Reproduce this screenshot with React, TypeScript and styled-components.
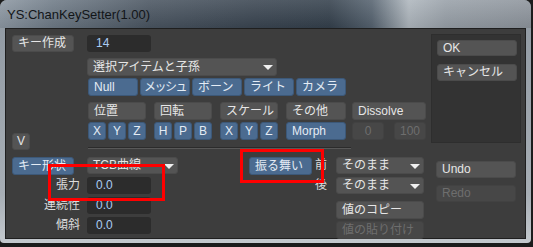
import styled, { createGlobalStyle } from "styled-components"

const GlobalStyle = createGlobalStyle`
  html, body {
    margin: 0;
    padding: 0;
    background: #1c1c1c;
  }
  * {
    box-sizing: border-box;
  }
`

const FONT = `"Liberation Sans", "Noto Sans CJK JP", sans-serif`

type Tone = "gray" | "blue" | "off"

const itemTypes = ["Null", "メッシュ", "ボーン", "ライト", "カメラ"]

export default function App() {
  return (
    <>
      <GlobalStyle />
      <Window>
        <TitleBar>YS:ChanKeySetter(1.00)</TitleBar>
        <Panel>
          <Main>
            <TopSection>
              <LeftCol>
                <Btn $w={62} $h={17}>キー作成</Btn>
                <Btn $w={18} $h={17} $center>V</Btn>
              </LeftCol>
              <MidCol>
                <Field $w={64}>14</Field>
                <Select $w={190} $h={18} $mt={6}>
                  選択アイテムと子孫
                  <Arrow />
                </Select>
                <ButtonRow $mt={2}>
                  {itemTypes.map((t) => (
                    <Btn key={t} $tone="blue" $w={50} $tight={t === "メッシュ"}>
                      {t}
                    </Btn>
                  ))}
                </ButtonRow>
                <ButtonRow $mt={6} $gap={8}>
                  <Btn $w={58}>位置</Btn>
                  <Btn $w={58}>回転</Btn>
                  <Btn $w={58}>スケール</Btn>
                  <Btn $w={60}>その他</Btn>
                  <Btn $w={74} $ml={-2}>
                    Dissolve
                  </Btn>
                </ButtonRow>
                <ButtonRow $mt={2} $gap={8}>
                  <AxisGroup>
                    {["X", "Y", "Z"].map((a) => (
                      <Btn key={a} $tone="blue" $w={18} $center>
                        {a}
                      </Btn>
                    ))}
                  </AxisGroup>
                  <AxisGroup>
                    {["H", "P", "B"].map((a) => (
                      <Btn key={a} $tone="blue" $w={18} $center>
                        {a}
                      </Btn>
                    ))}
                  </AxisGroup>
                  <AxisGroup>
                    {["X", "Y", "Z"].map((a) => (
                      <Btn key={a} $tone="blue" $w={18} $center>
                        {a}
                      </Btn>
                    ))}
                  </AxisGroup>
                  <Btn $tone="blue" $w={60}>
                    Morph
                  </Btn>
                  <Btn $tone="off" $w={32} $center $ml={-2}>
                    0
                  </Btn>
                  <Btn $tone="off" $w={32} $center $ml={2}>
                    100
                  </Btn>
                </ButtonRow>
                <Separator />
              </MidCol>
            </TopSection>

            <BottomSection>
              <ParamGrid>
                <Btn $tone="blue" $w={62}>
                  キー形状
                </Btn>
                <Select $w={91} $h={17}>
                  TCB曲線
                  <Arrow />
                </Select>
                <Label>張力</Label>
                <Field $w={64}>0.0</Field>
                <Label>連続性</Label>
                <Field $w={64}>0.0</Field>
                <Label>傾斜</Label>
                <Field $w={64}>0.0</Field>
              </ParamGrid>
              <BehaviorGrid>
                <Btn $tone="blue" $w={63}>
                  振る舞い
                </Btn>
                <SideLabel>前</SideLabel>
                <Select $w={88} $h={17}>
                  そのまま
                  <Arrow />
                </Select>
                <span />
                <SideLabel>後</SideLabel>
                <Select $w={88} $h={17}>
                  そのまま
                  <Arrow />
                </Select>
                <span />
                <span />
                <Btn $w={88}>値のコピー</Btn>
                <span />
                <span />
                <Btn $tone="off" $w={88}>
                  値の貼り付け
                </Btn>
              </BehaviorGrid>
            </BottomSection>
          </Main>

          <Side>
            <OkBox>
              <Btn $w={80} $h={16}>
                OK
              </Btn>
              <Btn $w={80} $h={17} $mt={8}>
                キャンセル
              </Btn>
            </OkBox>
            <Btn $w={80} $h={17} $mt={18} $ml={5}>
              Undo
            </Btn>
            <Btn $tone="off" $w={80} $h={17} $mt={7} $ml={5}>
              Redo
            </Btn>
          </Side>
        </Panel>

        <Mark $x={48} $y={164} $w={117} $h={37} />
        <Mark $x={240} $y={149} $w={84} $h={34} />
      </Window>
    </>
  )
}

const Window = styled.div`
  position: relative;
  width: 531px;
  height: 243px;
  background: linear-gradient(to bottom, #8f98a1, #a7aeb5 80%, #c4c9ce);
  border-radius: 7px 7px 4px 4px;
  font-family: ${FONT};
  font-size: 12px;
`

const TitleBar = styled.div`
  height: 28px;
  padding: 1px 0 0 7px;
  line-height: 27px;
  font-family: "Liberation Sans", sans-serif;
  font-size: 13px;
  color: #121518;
  border-radius: 7px 7px 0 0;
  background:
    linear-gradient(to bottom, rgba(255, 255, 255, 0.12), rgba(0, 0, 0, 0.08)),
    linear-gradient(
      to right,
      #8c97a2 0%,
      #6e7a86 10%,
      #4a5561 28%,
      #3a4551 48%,
      #34404c 62%,
      #55626f 70%,
      #aeb6bd 77%,
      #98a0a8 84%,
      #8d949c 100%
    );
`

const Panel = styled.div`
  display: flex;
  width: 521px;
  height: 211px;
  margin-left: 5px;
  border: 1px solid #1f1f1f;
  background: #3d3d3d;
`

const Main = styled.div`
  width: 425px;
  padding: 6px 0 0 6px;
`

const TopSection = styled.div`
  display: flex;
  height: 115px;
`

const LeftCol = styled.div`
  width: 75px;
  display: flex;
  flex-direction: column;
  justify-content: space-between;
`

const MidCol = styled.div`
  display: flex;
  flex-direction: column;
`

const ButtonRow = styled.div<{ $mt?: number; $gap?: number }>`
  display: flex;
  gap: ${({ $gap }) => $gap ?? 2}px;
  height: 18px;
  margin: ${({ $mt }) => $mt ?? 0}px 0 0 1px;
`

const AxisGroup = styled.div`
  display: flex;
  gap: 2px;
`

const Separator = styled.div`
  width: 263px;
  height: 2px;
  margin: 7px 0 0 1px;
  border-top: 1px solid #2b2b2b;
  border-bottom: 1px solid #585858;
`

const BottomSection = styled.div`
  display: flex;
  margin-top: 7px;
`

const ParamGrid = styled.div`
  display: grid;
  grid-template-columns: 75px 91px;
  grid-auto-rows: 17px;
  row-gap: 3px;
  align-items: start;
`

const BehaviorGrid = styled.div`
  display: grid;
  grid-template-columns: 63px 24px 88px;
  grid-template-rows: 20px 24px 20px 17px;
  align-items: start;
  margin-left: 71px;
`

const Label = styled.div`
  height: 17px;
  line-height: 17px;
  padding-right: 7px;
  text-align: right;
  color: #dcdcdc;
`

const SideLabel = styled.div`
  height: 17px;
  line-height: 17px;
  padding-left: 3px;
  color: #dcdcdc;
`

const Side = styled.div`
  width: 90px;
  display: flex;
  flex-direction: column;
`

const OkBox = styled.div`
  height: 109px;
  margin-top: 5px;
  padding: 5px;
  background: #333333;
  border: 1px solid #2e2e2e;
`

const tones: Record<Tone, { bg: string; border: string; color: string }> = {
  gray: { bg: "#545454", border: "#4b4b4b", color: "#e6e6e6" },
  blue: { bg: "#4b6b90", border: "#3c5878", color: "#e4ecf5" },
  off: { bg: "#474747", border: "#424242", color: "#6e6e6e" },
}

const Btn = styled.div<{
  $tone?: Tone
  $w: number
  $h?: number
  $center?: boolean
  $tight?: boolean
  $mt?: number
  $ml?: number
}>`
  flex: none;
  width: ${({ $w }) => $w}px;
  height: ${({ $h }) => $h ?? 18}px;
  margin-top: ${({ $mt }) => $mt ?? 0}px;
  margin-left: ${({ $ml }) => $ml ?? 0}px;
  padding: 0 ${({ $center, $tight }) => ($center ? 0 : $tight ? 3 : 5)}px;
  line-height: ${({ $h }) => ($h ?? 18) - 2}px;
  letter-spacing: ${({ $tight }) => ($tight ? "-1.5px" : "normal")};
  text-align: ${({ $center }) => ($center ? "center" : "left")};
  white-space: nowrap;
  overflow: hidden;
  border-radius: 3px;
  border: 1px solid ${({ $tone }) => tones[$tone ?? "gray"].border};
  background: ${({ $tone }) => tones[$tone ?? "gray"].bg};
  color: ${({ $tone }) => tones[$tone ?? "gray"].color};
`

const Field = styled.div<{ $w: number }>`
  width: ${({ $w }) => $w}px;
  height: 17px;
  padding-left: 9px;
  line-height: 17px;
  border-radius: 3px;
  background: #2c2c2c;
  color: #a9cbf3;
`

const Select = styled.div<{ $w: number; $h: number; $mt?: number }>`
  position: relative;
  width: ${({ $w }) => $w}px;
  height: ${({ $h }) => $h}px;
  margin-top: ${({ $mt }) => $mt ?? 0}px;
  padding-left: 5px;
  line-height: ${({ $h }) => $h - 2}px;
  border-radius: 3px;
  border: 1px solid #4b4b4b;
  background: #545454;
  color: #e6e6e6;
  white-space: nowrap;
`

const Arrow = styled.span`
  position: absolute;
  right: 3px;
  top: 50%;
  margin-top: -2px;
  width: 0;
  height: 0;
  border-left: 5px solid transparent;
  border-right: 5px solid transparent;
  border-top: 5px solid #f0f0f0;
`

const Mark = styled.div<{ $x: number; $y: number; $w: number; $h: number }>`
  position: absolute;
  left: ${({ $x }) => $x}px;
  top: ${({ $y }) => $y}px;
  width: ${({ $w }) => $w}px;
  height: ${({ $h }) => $h}px;
  border: 3px solid #ff0000;
  pointer-events: none;
`
